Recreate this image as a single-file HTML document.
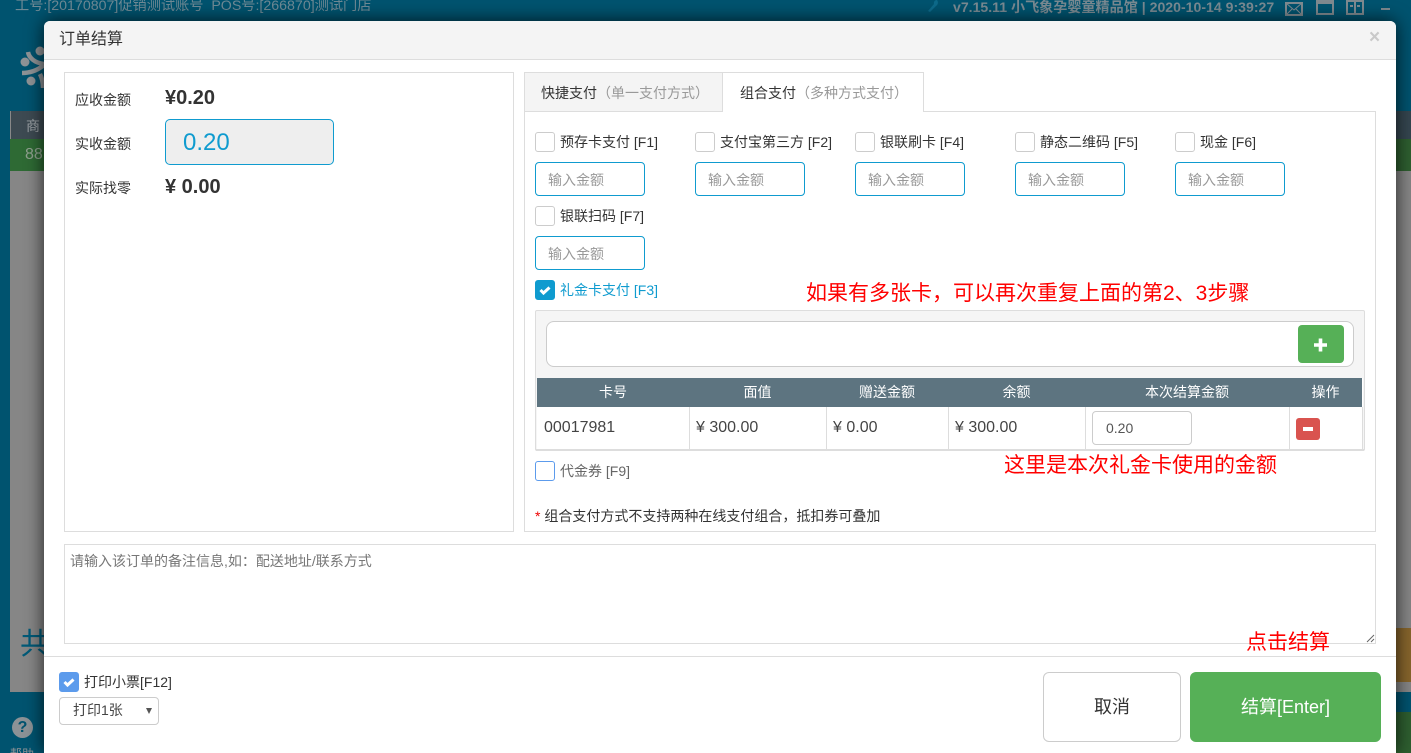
<!DOCTYPE html>
<html><head><meta charset="utf-8"><style>
*{box-sizing:border-box}
html,body{margin:0;padding:0;width:1411px;height:753px;overflow:hidden;background:#00536f}
#wrap{position:relative;width:1411px;height:753px;overflow:hidden;background:#00536f;font-family:"Liberation Sans","Noto Sans CJK SC",sans-serif;font-size:14px;color:#333}
.a{position:absolute}
.t{position:absolute;white-space:nowrap;line-height:18px}
.cb{position:absolute;width:20px;height:20px;border:1px solid #ccc;border-radius:3px;background:#fff}
.cb.on{background:#0f9bcf;border-color:#0f9bcf}
.cb.blue{background:#5c9bec;border-color:#5c9bec}
.inp{position:absolute;width:110px;height:34px;border:1px solid #0f9bcf;border-radius:4px;background:#fff;color:#999;padding:0 12px;line-height:34px;font-size:14px}
.th{position:absolute;top:378px;height:29px;line-height:29px;color:#fff;text-align:center;font-size:14px}
.td{position:absolute;top:407px;height:42px;line-height:41px;font-size:16px;color:#444;white-space:nowrap}
.vl{position:absolute;top:407px;width:1px;height:43px;background:#ddd}
.red{position:absolute;color:#f00;white-space:nowrap;font-size:21px;line-height:26px}
</style></head><body><div id="wrap">
<!-- backdrop -->
<div class="t" style="left:15px;top:-3px;font-size:14.200px;color:#6f8a95">工号:[20170807]促销测试账号&nbsp;&nbsp;POS号:[266870]测试门店</div>
<div class="t" style="left:953px;top:-2px;font-size:14.100px;font-weight:bold;color:#7a8a92">v7.15.11 小飞象孕婴童精品馆 | 2020-10-14 9:39:27</div>
<svg class="a" style="left:925px;top:0" width="18" height="14" viewBox="0 0 18 14"><path d="M12 0a4 4 0 0 1-1 6L5 12l-2-1 6-7a3 3 0 0 1 3-4z" fill="#0d6a8a"/></svg>
<svg class="a" style="left:1284px;top:0" width="110" height="18" viewBox="0 0 110 18" fill="none" stroke="#7f8a90" stroke-width="2"><rect x="2" y="3" width="16" height="12"/><path d="M2 3l8 7 8-7M2 15l6-6M18 15l-6-6" stroke-width="1"/><rect x="33" y="1" width="16" height="13"/><path d="M33 2h16" stroke-width="4"/><rect x="63" y="1" width="16" height="13"/><path d="M71 1v13M66 6h3M73 6h3" /><path d="M97 9h9"/></svg>
<svg class="a" style="left:20px;top:46px" width="24" height="44" viewBox="0 0 24 44" fill="#8f9396" stroke="none"><circle cx="5" cy="16" r="4.500"/><circle cx="20" cy="5" r="4.500"/><circle cx="11" cy="35" r="4.500"/><path d="M8 6c1 6 7 11 16 12M2 27c8 0 16-3 22-8M20 28c2 4 3 9 3 14" fill="none" stroke="#8f9396" stroke-width="4.500"/></svg>
<div class="a" style="left:10px;top:111px;width:34px;height:28px;background:#3d4a52;border-left:1px solid #888"></div>
<div class="t" style="left:26px;top:117px;color:#9aa0a4;font-size:14px">商</div>
<div class="a" style="left:10px;top:139px;width:34px;height:32px;background:#2e6a34"></div>
<div class="t" style="left:25px;top:146px;color:#8fa08f;font-size:16px">88</div>
<div class="a" style="left:10px;top:171px;width:34px;height:521px;background:#868686"></div>
<div class="t" style="left:20px;top:628px;color:#005a78;font-size:30px;line-height:34px;width:24px;overflow:hidden">共</div>
<div class="a" style="left:12px;top:717px;width:21px;height:21px;border-radius:50%;background:#8c9296;color:#00536f;font-weight:bold;font-size:16px;line-height:21px;text-align:center">?</div>
<div class="t" style="left:10px;top:745px;color:#8c9296;font-size:12px">帮助</div>
<div class="a" style="left:1396px;top:111px;width:15px;height:28px;background:#354650"></div>
<div class="a" style="left:1396px;top:139px;width:15px;height:32px;background:#2e5f30"></div>
<div class="a" style="left:1396px;top:171px;width:15px;height:521px;background:#868686"></div>
<div class="a" style="left:1396px;top:628px;width:15px;height:54px;background:#87652c"></div>
<div class="a" style="left:1396px;top:692px;width:15px;height:20px;background:#00536f"></div>
<div class="a" style="left:1396px;top:712px;width:15px;height:41px;background:#2e5f30"></div>
<!-- modal -->
<div class="a" style="left:44px;top:21px;width:1352px;height:732px;background:#fff;border-radius:6px 6px 0 0;box-shadow:0 0 18px rgba(0,0,0,.75)"></div>
<div class="a" style="left:44px;top:21px;width:1352px;height:39px;background:#f4f4f4;border-bottom:1px solid #ddd;border-radius:6px 6px 0 0"></div>
<div class="t" style="left:59px;top:31px;font-size:16px;color:#333">订单结算</div>
<div class="t" style="left:1369px;top:29px;font-size:19px;font-weight:bold;color:#c9c9c9">×</div>
<!-- left panel -->
<div class="a" style="left:64px;top:72px;width:450px;height:460px;border:1px solid #ddd"></div>
<div class="t" style="left:75px;top:91px">应收金额</div>
<div class="t" style="left:165px;top:88px;font-size:20px;font-weight:bold;line-height:20px">¥0.20</div>
<div class="t" style="left:75px;top:135px">实收金额</div>
<div class="a" style="left:165px;top:119px;width:169px;height:46px;border:1px solid #0f9bcf;border-radius:5px;background:#eee;color:#0f9bcf;font-size:24px;line-height:45px;padding-left:17px">0.20</div>
<div class="t" style="left:75px;top:179px">实际找零</div>
<div class="t" style="left:165px;top:177px;font-size:20px;font-weight:bold;line-height:20px">¥ 0.00</div>
<!-- right panel -->
<div class="a" style="left:524px;top:111px;width:852px;height:421px;border:1px solid #ddd"></div>
<div class="a" style="left:524px;top:72px;width:199px;height:40px;background:#f4f4f4;border:1px solid #ddd"></div>
<div class="a" style="left:723px;top:72px;width:201px;height:40px;background:#fff;border:1px solid #ddd;border-left:none;border-bottom:none"></div>
<div class="t" style="left:541px;top:84px">快捷支付<span style="color:#999">（单一支付方式）</span></div>
<div class="t" style="left:740px;top:84px">组合支付<span style="color:#999">（多种方式支付）</span></div>
<div class="cb" style="left:535px;top:132px"></div><div class="t" style="left:560px;top:133px">预存卡支付 [F1]</div>
<div class="cb" style="left:695px;top:132px"></div><div class="t" style="left:720px;top:133px">支付宝第三方 [F2]</div>
<div class="cb" style="left:855px;top:132px"></div><div class="t" style="left:880px;top:133px">银联刷卡 [F4]</div>
<div class="cb" style="left:1015px;top:132px"></div><div class="t" style="left:1040px;top:133px">静态二维码 [F5]</div>
<div class="cb" style="left:1175px;top:132px"></div><div class="t" style="left:1200px;top:133px">现金 [F6]</div>
<div class="inp" style="left:535px;top:162px">输入金额</div>
<div class="inp" style="left:695px;top:162px">输入金额</div>
<div class="inp" style="left:855px;top:162px">输入金额</div>
<div class="inp" style="left:1015px;top:162px">输入金额</div>
<div class="inp" style="left:1175px;top:162px">输入金额</div>
<div class="cb" style="left:535px;top:206px"></div><div class="t" style="left:560px;top:207px">银联扫码 [F7]</div>
<div class="inp" style="left:535px;top:236px">输入金额</div>
<div class="cb on" style="left:535px;top:280px"><svg width="18" height="18" viewBox="0 0 18 18"><path d="M4.500 9l3 3 6-5.500" fill="none" stroke="#fff" stroke-width="3"/></svg></div>
<div class="t" style="left:560px;top:281px;color:#0f9bcf">礼金卡支付 [F3]</div>
<div class="red" style="left:806px;top:281px">如果有多张卡，可以再次重复上面的第2、3步骤</div>
<!-- gift card box -->
<div class="a" style="left:535px;top:310px;width:830px;height:141px;background:#f5f5f5;border:1px solid #ddd;border-radius:2px"></div>
<div class="a" style="left:546px;top:321px;width:808px;height:46px;background:#fff;border:1px solid #ccc;border-radius:8px"></div>
<div class="a" style="left:1298px;top:325px;width:46px;height:38px;background:#56b057;border-radius:4px"></div>
<svg class="a" style="left:1313px;top:337px" width="16" height="16" viewBox="0 0 16 16"><path d="M7.500 1.500v13M1 8h13" stroke="#fff" stroke-width="3.600" fill="none"/></svg>
<div class="a" style="left:537px;top:378px;width:826px;height:72px;background:#fff"></div>
<div class="a" style="left:537px;top:378px;width:825px;height:29px;background:#5d7480"></div>
<div class="a" style="left:536px;top:449px;width:828px;height:2px;background:#ddd"></div>
<div class="th" style="left:537px;width:152px">卡号</div>
<div class="th" style="left:689px;width:137px">面值</div>
<div class="th" style="left:826px;width:122px">赠送金额</div>
<div class="th" style="left:948px;width:137px">余额</div>
<div class="th" style="left:1085px;width:204px">本次结算金额</div>
<div class="th" style="left:1289px;width:73px">操作</div>
<div class="vl" style="left:689px"></div><div class="vl" style="left:826px"></div><div class="vl" style="left:948px"></div><div class="vl" style="left:1085px"></div><div class="vl" style="left:1289px"></div><div class="vl" style="left:1362px"></div>
<div class="td" style="left:544px">00017981</div>
<div class="td" style="left:696px">¥ 300.00</div>
<div class="td" style="left:833px">¥ 0.00</div>
<div class="td" style="left:955px">¥ 300.00</div>
<div class="a" style="left:1092px;top:411px;width:100px;height:34px;border:1px solid #ccc;border-radius:4px;padding-left:13px;line-height:32px;font-size:14px;color:#555">0.20</div>
<div class="a" style="left:1296px;top:418px;width:24px;height:22px;background:#d9534f;border-radius:3px"></div>
<div class="a" style="left:1303px;top:427px;width:10px;height:3.500px;background:#fff"></div>
<div class="red" style="left:1004px;top:453px">这里是本次礼金卡使用的金额</div>
<div class="cb" style="left:535px;top:461px;border-color:#5c9bec"></div><div class="t" style="left:560px;top:462px;color:#666">代金券 [F9]</div>
<div class="t" style="left:535px;top:507px"><span style="color:#e00">*</span> 组合支付方式不支持两种在线支付组合，抵扣券可叠加</div>
<!-- textarea -->
<div class="a" style="left:64px;top:544px;width:1312px;height:100px;border:1px solid #ddd;color:#777;padding:7px 5px;line-height:18px">请输入该订单的备注信息,如：配送地址/联系方式</div>
<svg class="a" style="left:1366px;top:634px" width="9" height="9" viewBox="0 0 9 9"><path d="M1 8l7-7M5 8l3-3" stroke="#666" stroke-width="1"/></svg>
<div class="a" style="left:44px;top:656px;width:1352px;height:1px;background:#ddd"></div>
<div class="red" style="left:1246px;top:630px">点击结算</div>
<!-- footer -->
<div class="cb blue" style="left:59px;top:672px"><svg width="18" height="18" viewBox="0 0 18 18"><path d="M4.500 9l3 3 6-5.500" fill="none" stroke="#fff" stroke-width="3"/></svg></div>
<div class="t" style="left:84px;top:673px">打印小票[F12]</div>
<div class="a" style="left:59px;top:697px;width:100px;height:28px;border:1px solid #ccc;border-radius:4px;line-height:24px;padding-left:13px;font-size:14px;color:#444">打印1张</div>
<svg class="a" style="left:145px;top:708px" width="8" height="7" viewBox="0 0 8 7"><path d="M1 0h6L4 6z" fill="#555"/></svg>
<div class="a" style="left:1043px;top:672px;width:138px;height:70px;border:1px solid #ccc;border-radius:6px;background:#fff;text-align:center;line-height:69px;font-size:18px">取消</div>
<div class="a" style="left:1190px;top:672px;width:191px;height:70px;border-radius:6px;background:#56b057;color:#fff;text-align:center;line-height:70px;font-size:18px">结算[Enter]</div>
</div></body></html>
